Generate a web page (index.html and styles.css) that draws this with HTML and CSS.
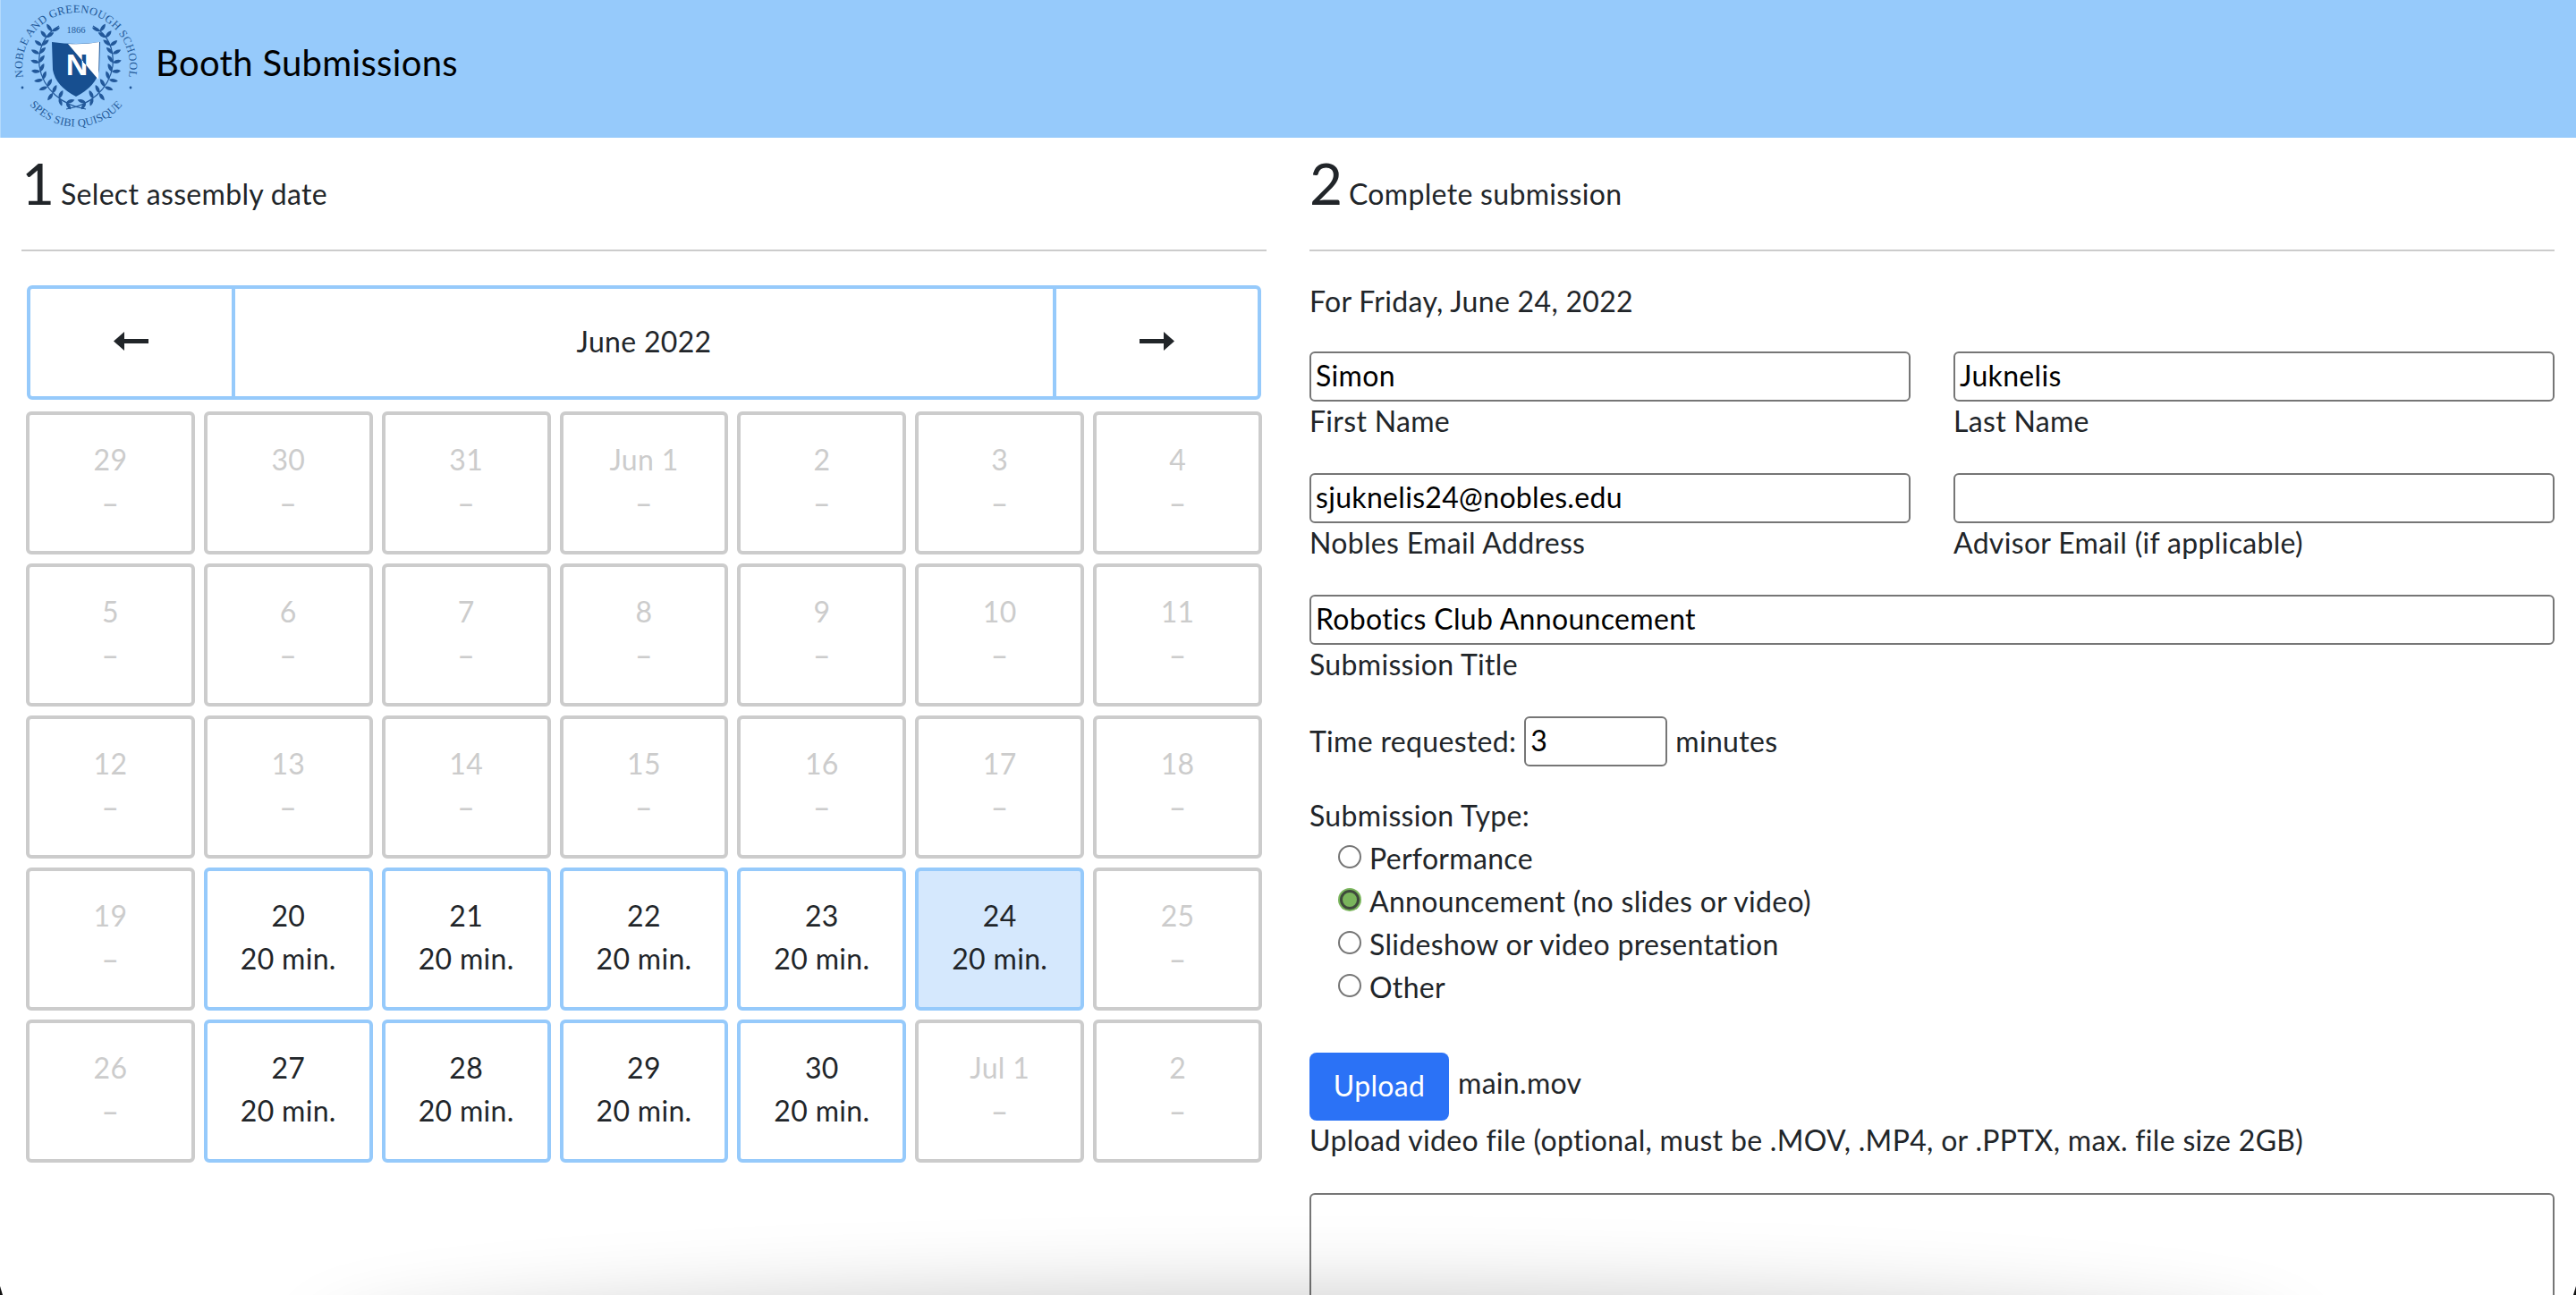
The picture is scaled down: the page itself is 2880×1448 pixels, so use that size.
FILE: index.html
```html
<!DOCTYPE html>
<html lang="en">
<head>
  <meta charset="UTF-8">
  <meta name="viewport" content="width=device-width, initial-scale=1.0">
  <title>Booth Submissions</title>
  <link rel="stylesheet" href="styles.css">
</head>
<body>
  <header class="topbar">
    <svg class="logo" viewBox="0 0 170 155" width="170" height="155">
      <defs>
        <path id="arc-top" d="M49 122 A60 60 0 1 1 121 122"/>
        <path id="arc-bottom" d="M26.1 107 A67.5 67.5 0 0 0 143.9 107"/>
        <path id="leaf" d="M0 0 C2.5 -2.8 7 -2.8 10 0 C7 2.4 2.5 2.4 0 0Z"/>
        <g id="branch">
          <path class="stem" d="M96 122 C70 118 48 100 44 74 C42 54 50 38 66 29"/>
          <use href="#leaf" transform="translate(74 115) rotate(-20)"/>
          <use href="#leaf" transform="translate(74 115) rotate(55) scale(.9)"/>
          <use href="#leaf" transform="translate(66 110) rotate(-65)"/>
          <use href="#leaf" transform="translate(66 110) rotate(70) scale(.9)"/>
          <use href="#leaf" transform="translate(59 104) rotate(-65)"/>
          <use href="#leaf" transform="translate(59 104) rotate(125)"/>
          <use href="#leaf" transform="translate(53 97) rotate(-60)"/>
          <use href="#leaf" transform="translate(53 97) rotate(160)"/>
          <use href="#leaf" transform="translate(48 89) rotate(-70)"/>
          <use href="#leaf" transform="translate(48 89) rotate(170)"/>
          <use href="#leaf" transform="translate(45 80) rotate(-65)"/>
          <use href="#leaf" transform="translate(45 80) rotate(185)"/>
          <use href="#leaf" transform="translate(44 70) rotate(-55)"/>
          <use href="#leaf" transform="translate(44 70) rotate(195)"/>
          <use href="#leaf" transform="translate(44 60) rotate(-45)"/>
          <use href="#leaf" transform="translate(44 60) rotate(205)"/>
          <use href="#leaf" transform="translate(47 51) rotate(-40)"/>
          <use href="#leaf" transform="translate(47 51) rotate(215)"/>
          <use href="#leaf" transform="translate(52 42) rotate(-35)"/>
          <use href="#leaf" transform="translate(52 42) rotate(230)"/>
          <use href="#leaf" transform="translate(58 35) rotate(-25)"/>
          <use href="#leaf" transform="translate(58 35) rotate(235)"/>
        </g>
        <linearGradient id="n-fill" gradientUnits="userSpaceOnUse" x1="93" y1="69" x2="133" y2="35">
          <stop offset="0" stop-color="#fff"/>
          <stop offset="0" stop-color="#174f90"/>
        </linearGradient>
      </defs>
      <text class="logo-ring"><textPath href="#arc-top" startOffset="50%" text-anchor="middle">NOBLE AND GREENOUGH SCHOOL</textPath></text>
      <text class="logo-ring"><textPath href="#arc-bottom" startOffset="50%" text-anchor="middle">SPES SIBI QUISQUE</textPath></text>
      <circle class="logo-mark" cx="25" cy="98" r="1.4"/>
      <circle class="logo-mark" cx="146" cy="98" r="1.4"/>
      <text class="logo-year" x="85" y="37" text-anchor="middle">1866</text>
      <use href="#branch" class="logo-mark"/>
      <use href="#branch" class="logo-mark" transform="translate(170 0) scale(-1 1)"/>
      <path class="logo-shield" d="M58 47 Q85 51 112 47 L111 78 Q108 96 85 108 Q62 96 59 78Z"/>
      <path class="logo-band" d="M76 49 Q95 50 111 47 L110 89Z"/>
      <text class="logo-n" x="86" y="84" text-anchor="middle">N</text>
    </svg>
    <h1>Booth Submissions</h1>
  </header>

  <main class="columns">
    <section>
      <div class="step-head"><span class="step-num">1</span> Select assembly date</div>
      <div class="month-nav">
        <button class="month-btn" aria-label="Previous month">
          <svg viewBox="0 0 39 21" width="39" height="21"><path d="M0 10.5 L12 0 V8 H39 V13 H12 V21Z"/></svg>
        </button>
        <div class="month-name">June 2022</div>
        <button class="month-btn" aria-label="Next month">
          <svg viewBox="0 0 39 21" width="39" height="21"><path d="M39 10.5 L27 0 V8 H0 V13 H27 V21Z"/></svg>
        </button>
      </div>
      <div class="calendar">
        <div class="day off">29<br><span class="dash">–</span></div>
        <div class="day off">30<br><span class="dash">–</span></div>
        <div class="day off">31<br><span class="dash">–</span></div>
        <div class="day off">Jun 1<br><span class="dash">–</span></div>
        <div class="day off">2<br><span class="dash">–</span></div>
        <div class="day off">3<br><span class="dash">–</span></div>
        <div class="day off">4<br><span class="dash">–</span></div>
        <div class="day off">5<br><span class="dash">–</span></div>
        <div class="day off">6<br><span class="dash">–</span></div>
        <div class="day off">7<br><span class="dash">–</span></div>
        <div class="day off">8<br><span class="dash">–</span></div>
        <div class="day off">9<br><span class="dash">–</span></div>
        <div class="day off">10<br><span class="dash">–</span></div>
        <div class="day off">11<br><span class="dash">–</span></div>
        <div class="day off">12<br><span class="dash">–</span></div>
        <div class="day off">13<br><span class="dash">–</span></div>
        <div class="day off">14<br><span class="dash">–</span></div>
        <div class="day off">15<br><span class="dash">–</span></div>
        <div class="day off">16<br><span class="dash">–</span></div>
        <div class="day off">17<br><span class="dash">–</span></div>
        <div class="day off">18<br><span class="dash">–</span></div>
        <div class="day off">19<br><span class="dash">–</span></div>
        <div class="day">20<br>20 min.</div>
        <div class="day">21<br>20 min.</div>
        <div class="day">22<br>20 min.</div>
        <div class="day">23<br>20 min.</div>
        <div class="day selected">24<br>20 min.</div>
        <div class="day off">25<br><span class="dash">–</span></div>
        <div class="day off">26<br><span class="dash">–</span></div>
        <div class="day">27<br>20 min.</div>
        <div class="day">28<br>20 min.</div>
        <div class="day">29<br>20 min.</div>
        <div class="day">30<br>20 min.</div>
        <div class="day off">Jul 1<br><span class="dash">–</span></div>
        <div class="day off">2<br><span class="dash">–</span></div>
      </div>
    </section>

    <section>
      <div class="step-head"><span class="step-num">2</span> Complete submission</div>
      <form class="form">
        <p class="for-date">For Friday, June 24, 2022</p>
        <div class="field-row">
          <label class="field"><input type="text" value="Simon"><span>First Name</span></label>
          <label class="field"><input type="text" value="Juknelis"><span>Last Name</span></label>
        </div>
        <div class="field-row">
          <label class="field"><input type="text" value="sjuknelis24@nobles.edu"><span>Nobles Email Address</span></label>
          <label class="field"><input type="text"><span>Advisor Email (if applicable)</span></label>
        </div>
        <label class="field"><input type="text" value="Robotics Club Announcement"><span>Submission Title</span></label>
        <div class="time-row">
          <label for="time">Time requested:</label>
          <input id="time" type="text" value="3">
          <span>minutes</span>
        </div>
        <div class="type-title">Submission Type:</div>
        <label class="radio-row"><input type="radio" name="type"> Performance</label>
        <label class="radio-row"><input type="radio" name="type" checked> Announcement (no slides or video)</label>
        <label class="radio-row"><input type="radio" name="type"> Slideshow or video presentation</label>
        <label class="radio-row"><input type="radio" name="type"> Other</label>
        <div class="upload-row">
          <button type="button" class="upload-btn">Upload</button>
          <span>main.mov</span>
        </div>
        <div class="upload-note">Upload video file (optional, must be .MOV, .MP4, or .PPTX, max. file size 2GB)</div>
        <textarea class="notes"></textarea>
      </form>
    </section>
  </main>

  <div class="bottom-shadow"></div>
</body>
</html>
```

FILE: styles.css
```css
* {
  box-sizing: border-box;
}
html, body {
  height: 1448px;
  overflow: hidden;
}
body {
  margin: 0;
  position: relative;
  background-color: #fff;
  color: #212529;
  font-family: Lato, "Noto Sans", sans-serif;
  font-size: 32px;
  line-height: 48px;
  letter-spacing: 0.32px;
}
input, textarea, button {
  font: inherit;
  color: inherit;
  letter-spacing: inherit;
}

.topbar {
  display: flex;
  align-items: center;
  height: 154px;
  background-color: #96cafb;
  box-shadow: inset 1px 0 0 #b4dafc;
}
.topbar h1 {
  margin: 0 0 15px 4px;
  color: #000;
  font-size: 40px;
  font-weight: 400;
  line-height: 48px;
}
.logo {
  flex: none;
}
.logo-ring {
  fill: #245a9a;
  font-family: "Liberation Serif", serif;
  font-size: 12.5px;
  letter-spacing: 0.3px;
}
.logo-year {
  fill: #245a9a;
  font-family: "Liberation Serif", serif;
  font-size: 10.5px;
  letter-spacing: 0;
}
.logo-mark {
  fill: #22589a;
  stroke: none;
}
.stem {
  fill: none;
  stroke: #22589a;
  stroke-width: 1.2;
}
.logo-shield {
  fill: #174f90;
}
.logo-band {
  fill: #fff;
}
.logo-n {
  fill: url(#n-fill);
  font-family: "Liberation Sans", sans-serif;
  font-size: 34px;
  font-weight: 700;
  letter-spacing: 0;
}

.columns {
  display: grid;
  grid-template-columns: 1fr 1fr;
  gap: 48px;
  padding: 0 24px;
}
.step-head {
  height: 127px;
  padding-top: 14px;
  border-bottom: 2px solid #ccc;
  line-height: 74px;
}
.step-num {
  font-size: 64px;
  margin-right: -2px;
}

.month-nav {
  display: grid;
  grid-template-columns: 225px 1fr 225px;
  height: 128px;
  margin: 38px 6px 0;
  border: 4px solid #96cafb;
  border-radius: 6px;
}
.month-btn {
  display: flex;
  align-items: center;
  justify-content: center;
  padding: 0 0 4px;
  border: none;
  background: none;
}
.month-btn svg {
  fill: #212529;
}
.month-name {
  display: flex;
  align-items: center;
  justify-content: center;
  padding-bottom: 3px;
  border-left: 4px solid #96cafb;
  border-right: 4px solid #96cafb;
}
.calendar {
  display: grid;
  grid-template-columns: repeat(7, 1fr);
  grid-auto-rows: 160px;
  row-gap: 10px;
  margin-top: 13px;
}
.day {
  margin: 0 5px;
  padding-top: 26px;
  border: 4px solid #96cafb;
  border-radius: 6px;
  text-align: center;
}
.day.off {
  border-color: #ccc;
  color: #ccc;
}
.day.selected {
  background-color: #d5e8fd;
}
.dash {
  font-family: "Noto Sans", sans-serif;
}

.form {
  padding-top: 32px;
}
.for-date {
  margin: 0 0 32px;
}
.field-row {
  display: grid;
  grid-template-columns: 1fr 1fr;
  gap: 48px;
}
.field {
  display: block;
  margin-bottom: 36px;
  line-height: 44px;
}
.field span {
  display: block;
}
.field input,
.time-row input {
  display: block;
  width: 100%;
  height: 56px;
  padding: 0 5px 3px;
  border: 2px solid #767676;
  border-radius: 6px;
  background-color: #fff;
  color: #000;
}
.time-row {
  display: flex;
  align-items: center;
  gap: 9px;
  height: 56px;
}
.time-row input {
  width: 160px;
}
.type-title {
  margin-top: 31px;
}
.radio-row {
  display: flex;
  align-items: center;
  gap: 9px;
  height: 48px;
  padding-left: 32px;
}
.radio-row input {
  appearance: none;
  flex: none;
  width: 26px;
  height: 26px;
  margin: -5px 0 0;
  border: 2px solid #767676;
  border-radius: 50%;
  background-color: #fff;
}
.radio-row input:checked {
  border: 3px solid #3f4a3c;
  background-color: #7ab55c;
  box-shadow: 0 0 0 2px #7ab55c;
  width: 22px;
  height: 22px;
  margin: -5px 2px 0;
}
.upload-row {
  display: flex;
  align-items: center;
  gap: 10px;
  margin-top: 49px;
}
.upload-row span {
  margin-bottom: 8px;
}
.upload-btn {
  width: 156px;
  height: 76px;
  padding: 0 0 3px;
  border: none;
  border-radius: 8px;
  background-color: #2b72f6;
  color: #fff;
}
.upload-note {
  margin-top: -2px;
}
.notes {
  display: block;
  width: 100%;
  height: 300px;
  margin-top: 35px;
  border: 2px solid #767676;
  border-radius: 6px;
  resize: none;
}

/* shadow of the window underneath, shows over the content */
.bottom-shadow {
  position: absolute;
  left: 400px;
  right: 360px;
  top: 1490px;
  height: 60px;
  border-radius: 50%;
  box-shadow: 0 0 90px 40px rgba(0, 0, 0, 0.22);
  pointer-events: none;
}

/* dark slivers where the rounded window corners meet the desktop */
body::before,
body::after {
  content: "";
  position: absolute;
  z-index: 2;
  top: 1438px;
  width: 3px;
  height: 10px;
  background-color: #111;
}
body::before {
  left: 0;
  clip-path: polygon(0 0, 100% 100%, 0 100%);
}
body::after {
  right: 0;
  clip-path: polygon(100% 0, 100% 100%, 0 100%);
}
```
